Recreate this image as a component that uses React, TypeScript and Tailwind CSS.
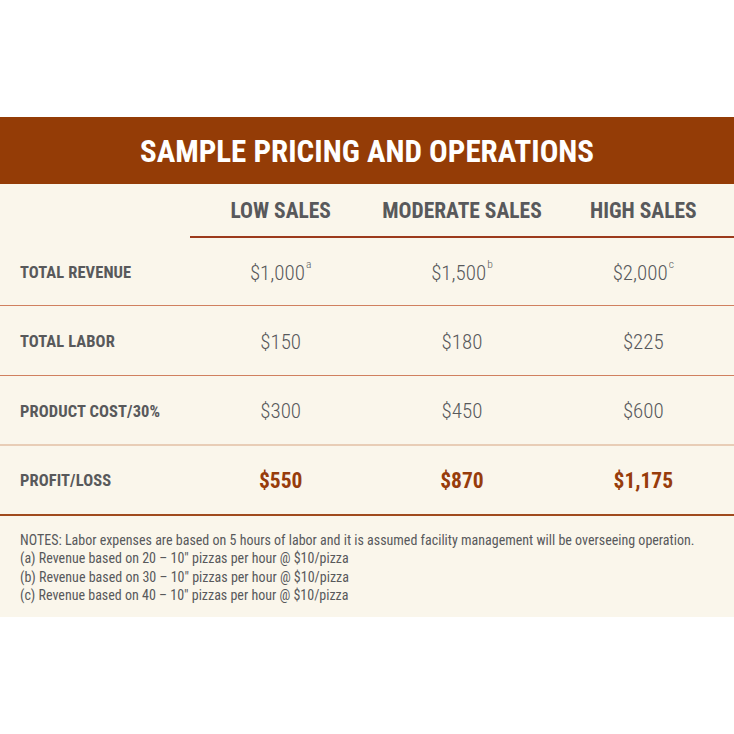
const rows = [
  { label: "TOTAL REVENUE", values: ["$1,000", "$1,500", "$2,000"], sup: ["a", "b", "c"] },
  { label: "TOTAL LABOR", values: ["$150", "$180", "$225"] },
  { label: "PRODUCT COST/30%", values: ["$300", "$450", "$600"] },
];

const profits = ["$550", "$870", "$1,175"];

const notes = [
  "NOTES: Labor expenses are based on 5 hours of labor and it is assumed facility management will be overseeing operation.",
  "(a) Revenue based on 20 \u2013 10\" pizzas per hour @ $10/pizza",
  "(b) Revenue based on 30 \u2013 10\" pizzas per hour @ $10/pizza",
  "(c) Revenue based on 40 \u2013 10\" pizzas per hour @ $10/pizza",
];

function Rule({ light }: { light?: boolean }) {
  return light ? <div className="h-[2px] bg-[#e8cdb6]" /> : <div className="h-px bg-[#d0805f]" />;
}

export default function App() {
  return (
    <div
      className="bg-white w-[734px] h-[734px] pt-[117px] text-[#58595b]"
      style={{ fontFamily: "'Roboto Condensed', Roboto, sans-serif" }}
    >
      <div className="h-[67px] bg-[#943c06] flex items-center justify-center">
        <h1 className="text-white font-bold text-[31px] leading-none pt-[2px]">
          SAMPLE PRICING AND OPERATIONS
        </h1>
      </div>

      <div className="bg-[#faf6eb]">
        {/* column headings */}
        <div className="grid grid-cols-[190px_1fr_1fr_1fr] h-[52px] font-bold text-[21.5px] leading-none">
          <div />
          <div className="flex items-center justify-center pt-[2px]">LOW SALES</div>
          <div className="flex items-center justify-center pt-[2px]">MODERATE SALES</div>
          <div className="flex items-center justify-center pt-[2px]">HIGH SALES</div>
        </div>
        <div className="ml-[190px] h-[2px] bg-[#9c3a1c]" />

        {rows.map((row, r) => (
          <div key={row.label}>
            <div className={`grid grid-cols-[190px_1fr_1fr_1fr] pt-[4px] ${r === 0 ? "h-[67px]" : r === 2 ? "h-[68px]" : "h-[69px]"}`}>
              <div className="flex items-center pl-5 font-bold text-[16.5px] tracking-[0.1px]">{row.label}</div>
              {row.values.map((v, i) => (
                <div key={v} className="flex items-center justify-center font-light text-[21px]">
                  <span>
                    {v}
                    {row.sup && (
                      <span className="text-[11.5px] align-top leading-none relative top-[1px] ml-[1px]">
                        {row.sup[i]}
                      </span>
                    )}
                  </span>
                </div>
              ))}
            </div>
            <Rule light={r === 2} />
          </div>
        ))}

        <div className="grid grid-cols-[190px_1fr_1fr_1fr] h-[68px] pt-[3px]">
          <div className="flex items-center pl-5 font-bold text-[16.5px] tracking-[0.1px]">PROFIT/LOSS</div>
          {profits.map((p) => (
            <div key={p} className="flex items-center justify-center font-bold text-[21.5px] text-[#973c0b]">
              {p}
            </div>
          ))}
        </div>
        <div className="h-[2px] bg-[#a04a1d]" />

        {/* footnotes */}
        <div className="px-5 pt-[15px] pb-[13px] text-[14px] leading-[18.3px]">
          {notes.map((n) => (
            <p key={n}>{n}</p>
          ))}
        </div>
      </div>
    </div>
  );
}
